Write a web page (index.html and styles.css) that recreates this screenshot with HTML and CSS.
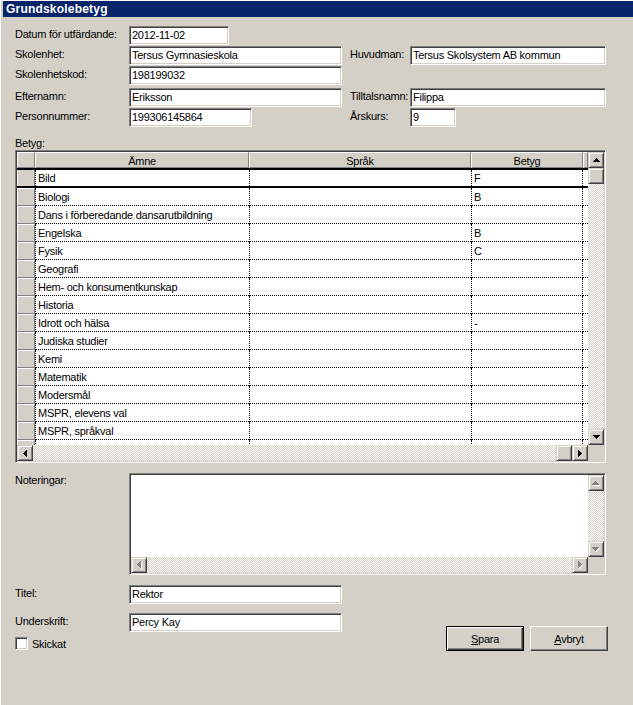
FILE: index.html
```html
<!DOCTYPE html>
<html lang="sv">
<head>
<meta charset="utf-8">
<title>Grundskolebetyg</title>
<link rel="stylesheet" href="styles.css">
</head>
<body>
<div class="window">
  <div class="titlebar">Grundskolebetyg</div>
  <div class="content">
    <div class="fields">
      <div class="frow">
        <span class="lbl">Datum för utfärdande:</span>
        <span class="tb w100">2012-11-02</span>
      </div>
      <div class="frow">
        <span class="lbl">Skolenhet:</span>
        <span class="cell"><span class="tb w213">Tersus Gymnasieskola</span></span>
        <span class="lbl2">Huvudman:</span>
        <span class="tb w196">Tersus Skolsystem AB kommun</span>
      </div>
      <div class="frow tall">
        <span class="lbl">Skolenhetskod:</span>
        <span class="cell"><span class="tb w213">198199032</span></span>
      </div>
      <div class="frow">
        <span class="lbl">Efternamn:</span>
        <span class="cell"><span class="tb w213">Eriksson</span></span>
        <span class="lbl2">Tilltalsnamn:</span>
        <span class="tb w196">Filippa</span>
      </div>
      <div class="frow">
        <span class="lbl">Personnummer:</span>
        <span class="cell"><span class="tb w123">199306145864</span></span>
        <span class="lbl2">Årskurs:</span>
        <span class="tb w46">9</span>
      </div>
    </div>

    <div class="sect-lbl">Betyg:</div>
    <div class="gridbox">
      <div class="gbody">
        <div class="ghead">
          <span class="hc rhh"></span>
          <span class="hc amne-h">Ämne</span>
          <span class="hc sprak-h">Språk</span>
          <span class="hc betyg-h">Betyg</span>
          <span class="hc fill-h"></span>
        </div>
        <div class="row cur"><span class="rh"></span><span class="c amne">Bild</span><span class="c sprak"></span><span class="c betyg">F</span><span class="c fill"></span></div>
        <div class="row"><span class="rh"></span><span class="c amne">Biologi</span><span class="c sprak"></span><span class="c betyg">B</span><span class="c fill"></span></div>
        <div class="row"><span class="rh"></span><span class="c amne">Dans i förberedande dansarutbildning</span><span class="c sprak"></span><span class="c betyg"></span><span class="c fill"></span></div>
        <div class="row"><span class="rh"></span><span class="c amne">Engelska</span><span class="c sprak"></span><span class="c betyg">B</span><span class="c fill"></span></div>
        <div class="row"><span class="rh"></span><span class="c amne">Fysik</span><span class="c sprak"></span><span class="c betyg">C</span><span class="c fill"></span></div>
        <div class="row"><span class="rh"></span><span class="c amne">Geografi</span><span class="c sprak"></span><span class="c betyg"></span><span class="c fill"></span></div>
        <div class="row"><span class="rh"></span><span class="c amne">Hem- och konsumentkunskap</span><span class="c sprak"></span><span class="c betyg"></span><span class="c fill"></span></div>
        <div class="row"><span class="rh"></span><span class="c amne">Historia</span><span class="c sprak"></span><span class="c betyg"></span><span class="c fill"></span></div>
        <div class="row"><span class="rh"></span><span class="c amne">Idrott och hälsa</span><span class="c sprak"></span><span class="c betyg">-</span><span class="c fill"></span></div>
        <div class="row"><span class="rh"></span><span class="c amne">Judiska studier</span><span class="c sprak"></span><span class="c betyg"></span><span class="c fill"></span></div>
        <div class="row"><span class="rh"></span><span class="c amne">Kemi</span><span class="c sprak"></span><span class="c betyg"></span><span class="c fill"></span></div>
        <div class="row"><span class="rh"></span><span class="c amne">Matematik</span><span class="c sprak"></span><span class="c betyg"></span><span class="c fill"></span></div>
        <div class="row"><span class="rh"></span><span class="c amne">Modersmål</span><span class="c sprak"></span><span class="c betyg"></span><span class="c fill"></span></div>
        <div class="row"><span class="rh"></span><span class="c amne">MSPR, elevens val</span><span class="c sprak"></span><span class="c betyg"></span><span class="c fill"></span></div>
        <div class="row"><span class="rh"></span><span class="c amne">MSPR, språkval</span><span class="c sprak"></span><span class="c betyg"></span><span class="c fill"></span></div>
        <div class="row"><span class="rh"></span><span class="c amne">Musik</span><span class="c sprak"></span><span class="c betyg"></span><span class="c fill"></span></div>
      </div>
      <div class="vs">
        <span class="sbtn"><svg width="7" height="4" viewBox="0 0 7 4"><path d="M3 0h1v1H3zM2 1h3v1H2zM1 2h5v1H1zM0 3h7v1H0z"/></svg></span>
        <span class="sbtn"></span>
        <span class="track"></span>
        <span class="sbtn"><svg width="7" height="4" viewBox="0 0 7 4"><path d="M0 0h7v1H0zM1 1h5v1H1zM2 2h3v1H2zM3 3h1v1H3z"/></svg></span>
      </div>
      <div class="hs">
        <span class="sbtn"><svg width="4" height="7" viewBox="0 0 4 7"><path d="M3 0h1v7H3zM2 1h1v5H2zM1 2h1v3H1zM0 3h1v1H0z"/></svg></span>
        <span class="track"></span>
        <span class="sbtn"></span>
        <span class="sbtn"><svg width="4" height="7" viewBox="0 0 4 7"><path d="M0 0h1v7H0zM1 1h1v5H1zM2 2h1v3H2zM3 3h1v1H3z"/></svg></span>
      </div>
      <div class="corner"></div>
    </div>

    <div class="nrow">
      <span class="lbl nlbl">Noteringar:</span>
      <div class="notes">
        <div class="ntext"></div>
        <div class="vs">
          <span class="sbtn dis"><svg width="8" height="5" viewBox="0 0 8 5"><path class="sh" d="M4 1h1v1H4zM3 2h3v1H3zM2 3h5v1H2zM1 4h7v1H1z"/><path d="M3 0h1v1H3zM2 1h3v1H2zM1 2h5v1H1zM0 3h7v1H0z"/></svg></span>
          <span class="track"></span>
          <span class="sbtn dis"><svg width="8" height="5" viewBox="0 0 8 5"><path class="sh" d="M1 1h7v1H1zM2 2h5v1H2zM3 3h3v1H3zM4 4h1v1H4z"/><path d="M0 0h7v1H0zM1 1h5v1H1zM2 2h3v1H2zM3 3h1v1H3z"/></svg></span>
        </div>
        <div class="hs">
          <span class="sbtn dis"><svg width="5" height="8" viewBox="0 0 5 8"><path class="sh" d="M4 1h1v7H4zM3 2h1v5H3zM2 3h1v3H2zM1 4h1v1H1z"/><path d="M3 0h1v7H3zM2 1h1v5H2zM1 2h1v3H1zM0 3h1v1H0z"/></svg></span>
          <span class="track"></span>
          <span class="sbtn dis"><svg width="5" height="8" viewBox="0 0 5 8"><path class="sh" d="M1 1h1v7H1zM2 2h1v5H2zM3 3h1v3H3zM4 4h1v1H4z"/><path d="M0 0h1v7H0zM1 1h1v5H1zM2 2h1v3H2zM3 3h1v1H3z"/></svg></span>
        </div>
        <div class="corner"></div>
      </div>
    </div>

    <div class="bottom">
      <div class="bleft">
        <div class="frow short">
          <span class="lbl">Titel:</span>
          <span class="tb w213">Rektor</span>
        </div>
        <div class="frow short gap9">
          <span class="lbl">Underskrift:</span>
          <span class="tb w213">Percy Kay</span>
        </div>
        <div class="chk"><span class="box"></span><span>Skickat</span></div>
      </div>
      <div class="buttons">
        <span class="btn def"><u>S</u>para</span>
        <span class="btn"><u>A</u>vbryt</span>
      </div>
    </div>
  </div>
</div>
</body>
</html>
```

FILE: styles.css
```css
* { box-sizing: border-box; }
html, body { margin: 0; padding: 0; }
body {
  width: 633px;
  height: 705px;
  overflow: hidden;
  background: #d4d0c8;
  font-family: "Liberation Sans", Arial, sans-serif;
  font-size: 11px;
  letter-spacing: -0.25px;
  color: #000;
}
.window {
  height: 705px;
  border-top: 1px solid #fff;
  border-left: 1px solid #fff;
}
.titlebar {
  margin-left: 2px;
  height: 16px;
  background: #0a246a;
  color: #fff;
  font-weight: bold;
  font-size: 12px;
  letter-spacing: 0.2px;
  line-height: 16px;
  padding-left: 3px;
}
.content { padding-left: 14px; }

/* form fields */
.fields { margin-top: 9px; }
.frow { display: flex; align-items: flex-start; height: 20px; }
.frow.tall { height: 22px; }
.frow.short { height: 19px; }
.frow.gap9 { margin-top: 9px; }
.lbl { width: 114px; flex: none; line-height: 17px; white-space: nowrap; }
.lbl2 { width: 60px; flex: none; line-height: 17px; white-space: nowrap; }
.cell { width: 221px; flex: none; }
.tb {
  display: block;
  flex: none;
  height: 19px;
  background: #fff;
  border: 1px solid;
  border-color: #808080 #fff #fff #808080;
  box-shadow: inset 1px 1px #404040, inset -1px -1px #d4d0c8;
  padding-left: 2px;
  line-height: 17px;
  white-space: nowrap;
  overflow: hidden;
}
.w100 { width: 100px; }
.w213 { width: 213px; }
.w196 { width: 196px; }
.w123 { width: 123px; }
.w46 { width: 46px; }

.sect-lbl { margin-top: 8px; height: 14px; line-height: 14px; }

/* sunken boxes */
.gridbox, .notes {
  display: grid;
  border: 1px solid;
  border-color: #808080 #fff #fff #808080;
  box-shadow: inset 1px 1px #404040, inset -1px -1px #d4d0c8;
  padding: 1px;
}
.gridbox {
  width: 591px;
  height: 313px;
  grid-template-columns: 571px 16px;
  grid-template-rows: 293px 16px;
  background: #d4d0c8;
}
.notes {
  width: 477px;
  height: 102px;
  grid-template-columns: 457px 16px;
  grid-template-rows: 82px 16px;
  background: #fff;
}
.ntext { background: #fff; }

/* data grid */
.gbody { display: flex; flex-direction: column; overflow: hidden; background: #fff; }
.ghead { display: flex; height: 16px; flex: none; }
.hc {
  display: block;
  height: 16px;
  background: #d4d0c8;
  border: 1px solid;
  border-color: #fff #808080 #808080 #fff;
  text-align: center;
  line-height: 14px;
  padding-top: 1px;
}
.rhh { width: 18px; }
.amne-h { width: 214px; }
.sprak-h { width: 222px; }
.betyg-h { width: 112px; }
.fill-h { width: 5px; }

.row { display: flex; height: 18px; flex: none; }
.row > span { display: block; height: 18px; flex: none; }
.rh {
  width: 18px;
  background: #d4d0c8;
  border-top: 1px solid #fff;
  border-left: 1px solid #fff;
  border-bottom: 1px solid #808080;
  border-right: 1px solid #808080;
}
.c {
  border-bottom: 1px dotted #000;
  padding-left: 2px;
  padding-top: 1px;
  line-height: 16px;
  white-space: nowrap;
  overflow: hidden;
}
.amne { width: 214px; border-left: 1px dotted #000; }
.sprak { width: 222px; border-left: 1px dotted #000; }
.betyg { width: 112px; border-left: 1px dotted #000; border-right: 1px dotted #000; }
.fill { width: 5px; padding-left: 0; }
.row.cur { height: 20px; border-top: 2px solid #000; border-bottom: 2px solid #000; }
.row.cur > span { height: 16px; border-bottom: none; line-height: 16px; padding-top: 0; }
.row.cur > .rh { border-top: none; }

/* scrollbars */
.vs { display: flex; flex-direction: column; }
.hs { display: flex; }
.sbtn {
  display: flex;
  align-items: center;
  justify-content: center;
  width: 16px;
  height: 16px;
  flex: none;
  background: #d4d0c8;
  border: 1px solid;
  border-color: #d4d0c8 #404040 #404040 #d4d0c8;
  box-shadow: inset 1px 1px #fff, inset -1px -1px #808080;
}
.sbtn svg { display: block; fill: #000; shape-rendering: crispEdges; }
.sbtn.dis svg { fill: #808080; }
.sbtn.dis svg .sh { fill: #fff; }
.track {
  flex: 1;
  background: repeating-conic-gradient(#d4d0c8 0% 25%, #fff 0% 50%) 0 0 / 2px 2px;
}
.corner { background: #d4d0c8; }

/* notes */
.nrow { display: flex; margin-top: 10px; }
.nlbl { line-height: 14px; }

/* bottom */
.bottom { display: flex; margin-top: 10px; }
.bleft { flex: none; }
.chk { display: flex; align-items: center; margin-top: 5px; height: 13px; gap: 4px; }
.box {
  width: 13px;
  height: 13px;
  background: #fff;
  border: 1px solid;
  border-color: #808080 #fff #fff #808080;
  box-shadow: inset 1px 1px #404040, inset -1px -1px #d4d0c8;
}
.buttons {
  display: flex;
  gap: 6px;
  margin-left: auto;
  margin-right: 25px;
  margin-bottom: -1px;
  align-self: flex-end;
}
.btn {
  display: flex;
  align-items: center;
  justify-content: center;
  width: 78px;
  height: 25px;
  background: #d4d0c8;
  border: 1px solid;
  border-color: #fff #404040 #404040 #fff;
  box-shadow: inset -1px -1px #808080;
}
.btn.def {
  border-color: #000;
  box-shadow: inset 1px 1px #fff, inset -1px -1px #404040, inset -2px -2px #808080;
}
.btn u { text-decoration: underline; }
```
